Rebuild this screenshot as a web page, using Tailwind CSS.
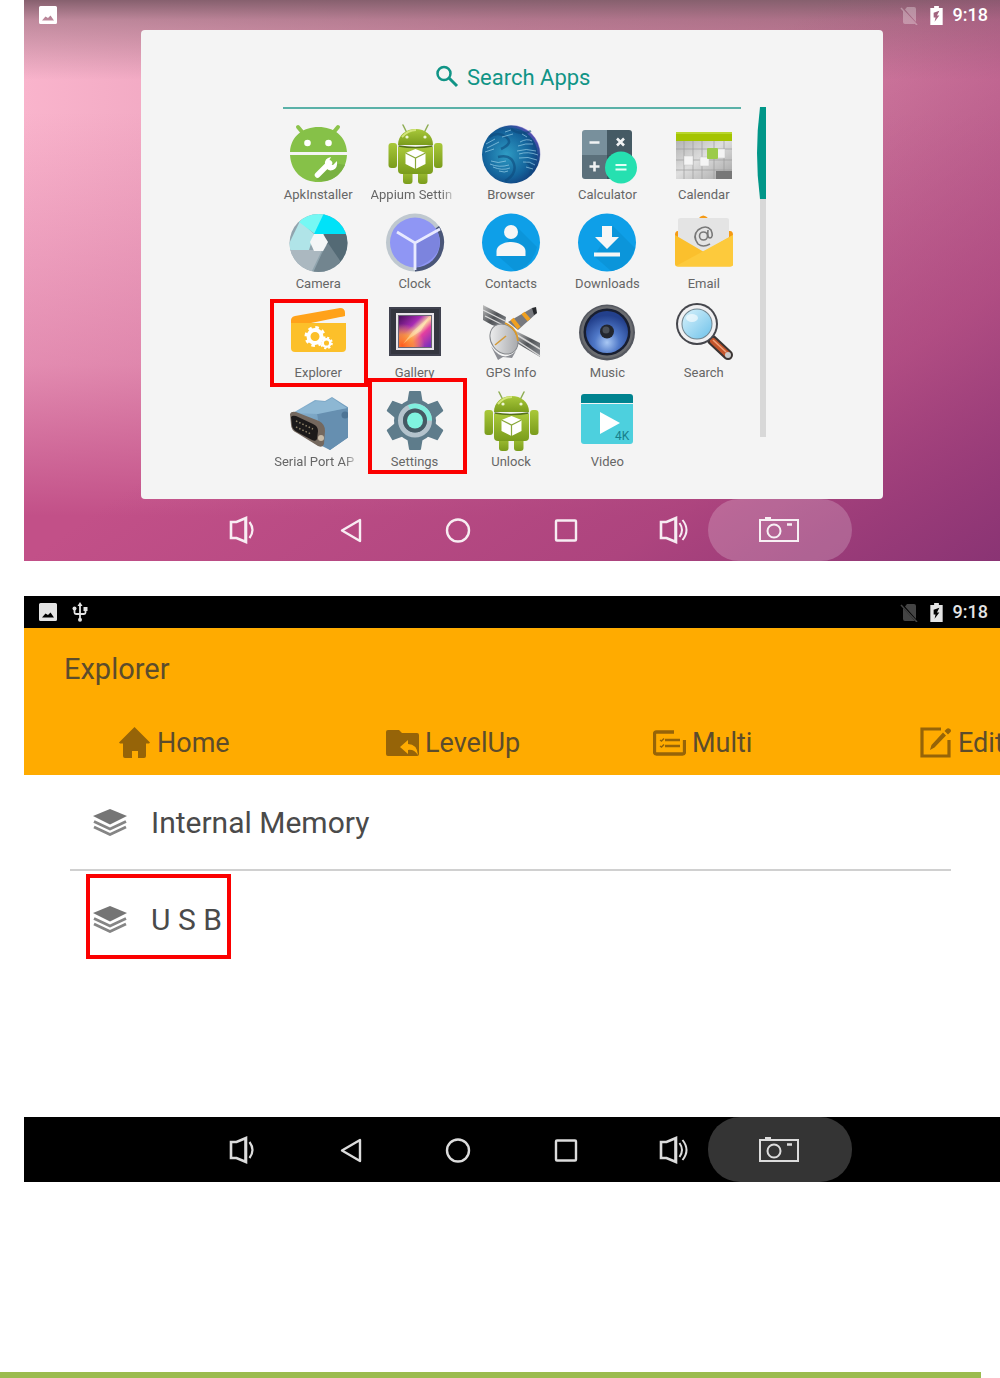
<!DOCTYPE html>
<html lang="en">
<head>
<meta charset="utf-8">
<title>Explorer – USB</title>
<script src="https://cdn.jsdelivr.net/npm/@tailwindcss/browser@4"></script>
</head>
<body class="bg-white font-['Roboto',sans-serif]">
<svg class="absolute size-0" aria-hidden="true">
  <defs>
    <linearGradient id="gDroid" x1="0" y1="0" x2="0" y2="1"><stop offset="0" stop-color="#a9c83a"/><stop offset="1" stop-color="#7a9c1c"/></linearGradient>
    <radialGradient id="gGlobe" cx=".42" cy=".5" r=".6"><stop offset="0" stop-color="#2f9cc4"/><stop offset=".65" stop-color="#14649c"/><stop offset="1" stop-color="#123a78"/></radialGradient>
    <linearGradient id="gRim" x1="0" y1="1" x2="1" y2="0"><stop offset=".6" stop-color="#1f5f9a" stop-opacity="0"/><stop offset="1" stop-color="#9a4fe0"/></linearGradient>
    <linearGradient id="gCal" x1="0" y1="0" x2="1" y2="1"><stop offset="0" stop-color="#b4b4b4"/><stop offset=".45" stop-color="#dedede"/><stop offset="1" stop-color="#a4a4a4"/></linearGradient>
    <linearGradient id="gPhoto" x1="0" y1="0" x2="1" y2="1"><stop offset="0" stop-color="#4b0f5c"/><stop offset=".35" stop-color="#a82bb4"/><stop offset=".52" stop-color="#ffd9a0"/><stop offset=".66" stop-color="#e43fa0"/><stop offset="1" stop-color="#6c2cc0"/></linearGradient>
    <radialGradient id="gFlare" cx=".1" cy=".95" r=".7"><stop offset="0" stop-color="#ff5a20"/><stop offset=".5" stop-color="#ff9a30" stop-opacity=".8"/><stop offset="1" stop-color="#ffb060" stop-opacity="0"/></radialGradient>
    <radialGradient id="gCone" cx=".5" cy=".75" r=".65"><stop offset="0" stop-color="#a9c8f4"/><stop offset=".45" stop-color="#4f78c8"/><stop offset="1" stop-color="#23408c"/></radialGradient>
    <linearGradient id="gLens" x1="0" y1="0" x2="1" y2="1"><stop offset="0" stop-color="#d8f2fc"/><stop offset="1" stop-color="#6fc2ea"/></linearGradient>
    <linearGradient id="gDish" x1="0" y1="0" x2="1" y2="1"><stop offset="0" stop-color="#fafafa"/><stop offset="1" stop-color="#9a9ca0"/></linearGradient>
    <linearGradient id="gMetal" x1="0" y1="0" x2="1" y2="1"><stop offset="0" stop-color="#c2c2c2"/><stop offset=".5" stop-color="#505357"/><stop offset="1" stop-color="#8f9297"/></linearGradient>
    <linearGradient id="gPlug" x1="0" y1="0" x2="1" y2="1"><stop offset="0" stop-color="#8fb8d4"/><stop offset="1" stop-color="#5a87ab"/></linearGradient>
  </defs>
  <symbol id="droid" viewBox="0 0 60 60">
    <path d="M22 9 18 1M39 9l4-8" stroke="#8fae55" stroke-width="1.5" stroke-linecap="round"/>
    <g fill="url(#gDroid)">
      <path d="M13 21C13 11 21 5 30.500 5S48 11 48 21z"/>
      <rect x="3.500" y="19" width="8.500" height="25" rx="3"/><rect x="49" y="19" width="8.500" height="25" rx="3"/>
      <rect x="18" y="44" width="9.500" height="16" rx="3"/><rect x="33" y="44" width="9.500" height="16" rx="3"/>
      <path d="M13 23h35v23q0 4-4 4H17q-4 0-4-4z"/>
    </g>
    <path d="M13.500 22q17 3 34 0" stroke="#54701a" stroke-width="1.500" fill="none"/>
    <path d="M17 13q6-7 14-7" stroke="#d3e57c" stroke-width="2" fill="none"/>
    <circle cx="22" cy="13" r="1.600" fill="#eef5d8"/><circle cx="40" cy="13" r="1.600" fill="#eef5d8"/>
    <path d="m30.500 25 10 4v11l-10 5-10-5V29z" fill="#fff"/>
    <path d="m20.500 29 10 5 10-5M30.500 34v11" stroke="#8aa83a" stroke-width="1.200" fill="none"/>
  </symbol>
  <symbol id="picture" viewBox="0 0 18 18"><path fill="currentColor" fill-rule="evenodd" d="M1.500 0h15Q18 0 18 1.500v15q0 1.500-1.500 1.500h-15Q0 18 0 16.500v-15Q0 0 1.500 0zM3 14.500h12L11.500 9.500 9 12 6.500 10.500z"/></symbol>
  <symbol id="usb" viewBox="0 0 16 20"><path d="M8 2v15M2.500 6v4.500q0 1.500 1.500 1.500h8q1.500 0 1.500-1.500V6" fill="none" stroke="currentColor" stroke-width="1.800"/><path fill="currentColor" d="m8 0 2.500 4h-5z"/><circle cx="8" cy="17.800" r="2" fill="currentColor"/><circle cx="2.500" cy="6.500" r="2" fill="currentColor"/><path fill="currentColor" d="M11.500 5h4v4h-4z"/></symbol>
  <symbol id="nosim" viewBox="0 0 18 20"><path fill="currentColor" d="M7 2h7q2 0 2 2v13L5 4.500zM3 6l12 13H5q-2 0-2-2z"/><path d="m1 3 16 17" stroke="currentColor" stroke-width="1.500"/></symbol>
  <symbol id="battery" viewBox="0 0 13 20"><path fill="currentColor" fill-rule="evenodd" d="M4 0h5v2h4v18H0V2h4zm5.500 5L3.500 7v5h2l-1 4.500L9.500 10H7z"/></symbol>
  <symbol id="vdown" viewBox="0 0 30 30"><path d="M4 7h5.500L19 3v24l-9.500-4H4zM18.500 3v24" fill="none" stroke="currentColor" stroke-width="2.600"/><path d="M22.500 7q6 8 0 16" fill="none" stroke="currentColor" stroke-width="2.200"/></symbol>
  <symbol id="vup" viewBox="0 0 34 30"><path d="M4 7h5.500L19 3v24l-9.500-4H4zM18.500 3v24" fill="none" stroke="currentColor" stroke-width="2.600"/><path d="M22.500 8q5 7 0 14M25.500 5q8 10 0 20" fill="none" stroke="currentColor" stroke-width="2"/></symbol>
  <symbol id="back" viewBox="0 0 24 26"><path d="M22 3v21L4 13.500z" fill="none" stroke="currentColor" stroke-width="2.400" stroke-linejoin="round"/></symbol>
  <symbol id="home" viewBox="0 0 26 26"><circle cx="13" cy="13.500" r="11" fill="none" stroke="currentColor" stroke-width="2.400"/></symbol>
  <symbol id="recent" viewBox="0 0 24 24"><rect x="2" y="2.500" width="20" height="20" rx="1" fill="none" stroke="currentColor" stroke-width="2.400"/></symbol>
  <symbol id="camera" viewBox="0 0 42 28"><path d="M1 4h38v21H1zM6 2h6" fill="none" stroke="currentColor" stroke-width="2"/><circle cx="15" cy="15" r="6.500" fill="none" stroke="currentColor" stroke-width="2"/><path d="M28 8.500h5" stroke="currentColor" stroke-width="2.500"/></symbol>
  <symbol id="layers" viewBox="0 0 34 28"><path d="m17 1 17 7-17 8.500L0 8z" fill="#757575"/><path d="m1 13.500 16 7.500 16-7.500M1 19l16 7.500L33 19" fill="none" stroke="#858585" stroke-width="2.800"/></symbol>
</svg>

<main class="pl-6">
  <!-- Launcher screen -->
  <section class="relative overflow-hidden bg-[linear-gradient(180deg,#86606e_0px,#86606e80_20px,#86606e00_80px),linear-gradient(90deg,#f9b4cc_0%,#e08fae_50%,#cf7a9d_100%)]">
    <div class="absolute inset-0 bg-[linear-gradient(145deg,#b4447e00_45%,#a43f7ab3_78%,#8a3474_100%),linear-gradient(180deg,#c4508600_20%,#c2508866_65%,#c25088_92%)]"></div>
    <div class="relative">
      <header class="flex h-[30px] items-center justify-between pl-[15px] pr-3 text-white">
        <svg class="size-[18px]"><use href="#picture"/></svg>
        <div class="flex items-center">
          <svg class="mr-3 h-5 w-[18px] text-white/30"><use href="#nosim"/></svg>
          <svg class="mr-[10px] h-[19px] w-[13px]"><use href="#battery"/></svg>
          <time class="text-lg font-medium">9:18</time>
        </div>
      </header>

      <div class="mx-[12%] h-[469px] rounded-sm bg-[#f4f4f4] pt-[29px]">
        <label class="flex h-9 items-center justify-center pl-1 text-[#109486]">
          <svg class="mr-2 size-6" viewBox="0 0 24 24" fill="none" stroke="currentColor"><circle cx="9" cy="8.500" r="6.500" stroke-width="2.500"/><path d="m14 13 8 8" stroke-width="3"/></svg>
          <input type="text" aria-label="Search Apps" placeholder="Search Apps" class="w-[126px] bg-transparent text-[22px] outline-none placeholder:text-[#109486]">
        </label>
        <div class="mt-3 flex justify-center pl-[13px]">
          <div class="w-[482px]">
            <div class="mx-3 h-0.5 bg-[#5ab1a8]"></div>
            <ul class="-ml-px mt-[15px] mr-px grid grid-cols-5 text-center text-[13px] leading-[18px] text-[#666]">
              <li class="h-[89px]"><a href="#" class="flex flex-col items-center gap-0.5">
                <svg class="size-[60px]" viewBox="0 0 60 60"><path d="m15 9-5-6M45 9l5-6" stroke="#8bc34a" stroke-width="4" stroke-linecap="round"/><path d="M2 28C3 12 15 3 30.500 3S58 12 59 28zM2 31h57C58 48 46 58 30.500 58S3 48 2 31z" fill="#86c148"/><circle cx="19.500" cy="19" r="3.300" fill="#fff"/><circle cx="40.500" cy="19" r="3.300" fill="#fff"/><path d="m28 56 18-17 11 2q-6 13-19 16z" fill="#79b142"/><path d="m29.500 51 12-12" stroke="#fff" stroke-width="5.500" stroke-linecap="round"/><path d="M43 33q-7 1-6 8 2 7 8 5 5-2 4-9l-4 4-3-1-1-3z" fill="#fff"/></svg>
                ApkInstaller</a></li>
              <li><a href="#" class="flex flex-col items-center gap-0.5"><svg class="size-[60px]"><use href="#droid"/></svg>
                <span class="w-[88px] overflow-hidden whitespace-nowrap text-left [mask-image:linear-gradient(90deg,#000_80%,transparent_98%)]">Appium Settin</span></a></li>
              <li><a href="#" class="flex flex-col items-center gap-0.5">
                <svg class="size-[60px]" viewBox="0 0 60 60"><circle cx="30" cy="30.500" r="29" fill="url(#gGlobe)"/><circle cx="30" cy="30.500" r="28" fill="none" stroke="url(#gRim)" stroke-width="3"/><g fill="none" stroke="#0e4a7c" stroke-width="2.500" opacity=".6"><path d="M8 13q9-6 17 0t-5 12M30 5q10 7 20 2M17 33q13-3 16 7t-9 17M45 38q8 4 4 13"/></g><g fill="none" stroke="#a4d8ee" stroke-width=".8" opacity=".8"><path d="M5 20l9-5M6 24l12-6M4 28l9-3M10 37q7 3 15 0M9 40q9 4 19 1M12 43q9 4 17 1M18 47q6 2 9 0M39 18q7-4 12-1M37 22q8-3 15-2M36 27q9-3 19 0M38 30q9-3 19 1M38 34q9-2 18 2M42 38q7-1 12 3M45 43l7 2M24 8l6-2M21 13l11-3M41 10l5 3"/></g></svg>
                Browser</a></li>
              <li><a href="#" class="flex flex-col items-center gap-0.5">
                <svg class="size-[60px]" viewBox="0 0 60 60"><path d="M8 6h22v25H5V9q0-3 3-3z" fill="#78909c"/><path d="M30 6h22q3 0 3 3v22H30z" fill="#455a64"/><path d="M5 31h25v24H8q-3 0-3-3z" fill="#5b707b"/><path d="M30 31h25v21q0 3-3 3H30z" fill="#3f525c"/><path d="M12.500 18.500h10M17.500 37.500v10M12.500 42.500h10M40 14.500l7 7m0-7-7 7" stroke="#f0f2f3" stroke-width="2.600"/><circle cx="44" cy="43.500" r="16" fill="#26e0b0"/><path d="M38.500 41h11M38.500 45.500h11" stroke="#e4fff6" stroke-width="2.200"/></svg>
                Calculator</a></li>
              <li><a href="#" class="flex flex-col items-center gap-0.5">
                <svg class="size-[60px]" viewBox="0 0 60 60"><path d="M2 17h56v38H2z" fill="url(#gCal)"/><path d="M2 25h56M2 36h56M2 46h56M10 17v38M19 17v38M28 17v38M40 17v38M50 17v38" stroke="#9c9c9c" stroke-width=".7"/><path d="M42 47h16v8H42z" fill="#777"/><path d="M10 32h9v9h-9zM26 33h9v9h-9zM43 25h8v9h-8z" fill="#f4f4f4" stroke="#c4c4c4" stroke-width=".5"/><rect x="33" y="24" width="11" height="11" rx="1" fill="#9ccb4a"/><path d="M2 8h56v9H2z" fill="#a4c400"/><path d="M2 8h56v2H2z" fill="#b8d62c"/></svg>
                Calendar</a></li>

              <li class="h-[89px]"><a href="#" class="flex flex-col items-center gap-0.5">
                <svg class="size-[60px]" viewBox="0 0 60 60"><clipPath id="lens"><circle cx="30.500" cy="30" r="29"/></clipPath><g clip-path="url(#lens)"><path d="M0 0h60v60H0z" fill="#90a4ae"/><path d="M-2 37 12 8l14 13-5 16z" fill="#b0e4e8"/><path d="M11 9 20 0h20L27 21z" fill="#76f8f4"/><path d="M36 0h30v21H26z" fill="#00e2f8"/><path d="M36 21h26v32H51L37 29z" fill="#546a75"/><path d="M40 30 55 52 40 62H24l10-22z" fill="#72858f"/><path d="M0 37h34L22 62H0z" fill="#abb8c0"/></g><path d="M26 21h9l5 8-5 9h-9l-4-9z" fill="#f4f6f7"/></svg>
                Camera</a></li>
              <li><a href="#" class="flex flex-col items-center gap-0.5">
                <svg class="size-[60px]" viewBox="0 0 60 60"><circle cx="30" cy="29.500" r="29" fill="#bfc8cf"/><path d="M54 13A29 29 0 0 1 30 58.500V30z" fill="#4a5678"/><circle cx="30" cy="29.500" r="25" fill="#8f96f4"/><path d="M30 30 52 17q11 26-22 38z" fill="#7c84de"/><path d="m12 19 18 11 25-14M30 30v27" stroke="#e8eaff" stroke-width="2.800" fill="none"/></svg>
                Clock</a></li>
              <li><a href="#" class="flex flex-col items-center gap-0.5">
                <svg class="size-[60px]" viewBox="0 0 60 60"><circle cx="30" cy="29.500" r="29" fill="#0e9fe8"/><path d="m36 14 20 20q-5 20-22 24L17 43z" fill="#0b95da"/><circle cx="30" cy="19" r="7" fill="#f6f6f6"/><path d="M15.500 43v-5c0-5 7-9 14.500-9s14.500 4 14.500 9v5z" fill="#f6f6f6"/></svg>
                Contacts</a></li>
              <li><a href="#" class="flex flex-col items-center gap-0.5">
                <svg class="size-[60px]" viewBox="0 0 60 60"><circle cx="30" cy="29.500" r="29" fill="#0e9fe8"/><path d="m36 13 22 22q-6 20-24 23L17 43z" fill="#0b95da"/><path d="M25 13h10v11h7L30 36 18 24h7z" fill="#f6f6f6"/><path d="M17 41.500h26" stroke="#f6f6f6" stroke-width="4"/></svg>
                Downloads</a></li>
              <li><a href="#" class="flex flex-col items-center gap-0.5">
                <svg class="size-[60px]" viewBox="0 0 60 60"><path d="M24 6q5-7 11 0zM1 22q0-4 3-4h52q3 0 3 4v5H1z" fill="#f59a14"/><path d="M7 5h46q2 0 2 2v34H4V7q0-2 3-2z" fill="#e4e4e4"/><path d="M1 22 30 39l29-17v29q0 2.500-3 2.500H4q-3 0-3-2.500z" fill="#fbc02d"/><path d="M2 53 59 22v29q0 2.500-3 2.500H4z" fill="#fdca3c"/><path d="M36 31q-7 4-12 0-6-8 0-14 8-6 13 0 3 7-1 8-3 0-2-8" fill="none" stroke="#787878" stroke-width="1.600"/><circle cx="29.500" cy="23" r="4" fill="none" stroke="#787878" stroke-width="1.600"/></svg>
                Email</a></li>

              <li class="relative h-[89px]"><a href="#" class="flex flex-col items-center gap-0.5">
                <svg class="size-[60px]" viewBox="0 0 60 60"><path d="M3 21q-1-6 4-7l45-8q5 0 5 5v3z" fill="#ffa21a"/><path d="M3 21h55v25q0 4-4 4H7q-4 0-4-4z" fill="#fcc02a"/><path d="M3 21h20l34-7v-3L3 18z" fill="#ffa21a"/><circle cx="27" cy="34.500" r="6.500" fill="none" stroke="#fff" stroke-width="4"/><circle cx="27" cy="34.500" r="9" fill="none" stroke="#fff" stroke-width="3" stroke-dasharray="3.500 3.570"/><circle cx="38.500" cy="41" r="3.800" fill="none" stroke="#fff" stroke-width="2.500"/><circle cx="38.500" cy="41" r="5.300" fill="none" stroke="#fff" stroke-width="2" stroke-dasharray="2.080 2.080"/></svg>
                Explorer</a>
                <span class="absolute -right-0.5 -top-[3px] left-0 h-[88px] border-4 border-[#fb0000]"></span></li>
              <li class="h-[89px]"><a href="#" class="flex flex-col items-center gap-0.5">
                <svg class="size-[60px]" viewBox="0 0 60 60"><path d="M4 5h52v49H4z" fill="#40424f"/><path d="M6 7h48v45H6z" fill="#34363f"/><path d="M11 11h38v37H11z" fill="#e8e4e8"/><path d="M13 13h34v33H13z" fill="#6a6474"/><path d="M14 14h32v31H14z" fill="url(#gPhoto)"/><path d="M14 14h32v31H14z" fill="url(#gFlare)"/><path d="m18 42 10-13 17-15-9 15-11 7z" fill="#fff0c0" opacity=".45"/></svg>
                Gallery</a></li>
              <li><a href="#" class="flex flex-col items-center gap-0.5">
                <svg class="size-[60px]" viewBox="0 0 60 60"><path d="m2 3 23 12-2 12-12-4L2 18z" fill="url(#gMetal)"/><path d="m2 8 22 11M4 14l18 9" stroke="#ddd" stroke-width="1.200"/><path d="m35 29 24 12v14L34 40z" fill="url(#gMetal)"/><path d="m36 33 23 14M35 38l24 16" stroke="#d4d4d4" stroke-width="1.500"/><path d="m27 20 24-14 5 5-19 17z" fill="#77797e"/><path d="m31 17 7 9M42 11l6 7" stroke="#f0a020" stroke-width="4"/><path d="m51 6 4-1 1 6-3 2z" fill="#26282c"/><ellipse cx="23" cy="37" rx="13" ry="16" transform="rotate(-35 23 37)" fill="url(#gDish)" stroke="#83868a"/><path d="M10 44q12 18 25 5l-4 7-9-1-5 3z" fill="#8c8e94"/><path d="m14 43 11-9" stroke="#d49a38" stroke-width="1.600"/><path d="M24 21q12 5 13 18" stroke="#dc9a28" stroke-width="1.800" fill="none"/></svg>
                GPS Info</a></li>
              <li><a href="#" class="flex flex-col items-center gap-0.5">
                <svg class="size-[60px]" viewBox="0 0 60 60"><circle cx="30" cy="30.500" r="28" fill="#555860"/><circle cx="30" cy="30" r="26" fill="#6a6c70"/><circle cx="30" cy="30" r="23.500" fill="#181e30"/><circle cx="30" cy="30" r="21" fill="url(#gCone)"/><circle cx="30" cy="29.500" r="7" fill="#22262e"/><circle cx="29" cy="28" r="3.500" fill="#4a5058"/></svg>
                Music</a></li>
              <li><a href="#" class="flex flex-col items-center gap-0.5">
                <svg class="size-[60px]" viewBox="0 0 60 60"><path d="m38 38 16 15" stroke="#3a3433" stroke-width="10" stroke-linecap="round"/><path d="m39 39 14 13" stroke="#c4552c" stroke-width="6" stroke-linecap="round"/><path d="m39 38 13 12" stroke="#f0a078" stroke-width="1.600"/><circle cx="54" cy="53" r="3" fill="#c8c8c8"/><circle cx="23" cy="22" r="21" fill="#45464c"/><circle cx="23" cy="22" r="19" fill="#f0f0f2"/><circle cx="23" cy="22" r="15.500" fill="#71858f"/><circle cx="23" cy="22" r="14.500" fill="url(#gLens)"/><ellipse cx="18" cy="16" rx="6" ry="4" fill="#fff" opacity=".6"/></svg>
                Search</a></li>

              <li class="h-[89px]"><a href="#" class="flex flex-col items-center gap-0.5">
                <svg class="size-[60px]" viewBox="0 0 60 60"><path d="M3 23 27 9l10 1 7-4 17 11 1 28-20 14-12-6z" fill="url(#gPlug)"/><path d="m29 22 33-5v28L42 59l-8-6z" fill="#668fb0"/><path d="m6 22 22-12 9 1 7-4 15 10-29 6z" fill="#8db7d3"/><path d="M2 23q1-3 6-2l23 9q6 3 6 10l-1 13q-1 4-6 2L9 42q-6-3-6-8z" fill="#74685e"/><path d="M3 26q1-2 5-1l17 8q5 2 5 7l-1 8q-1 3-5 1L9 41q-5-3-5-7z" fill="#1c1a1a"/><path d="m8 30 17 8M8 36l15 7" stroke="#91856a" stroke-width="1.500" stroke-dasharray="1.500 2"/><circle cx="33" cy="47" r="3" fill="#c8bba8"/><circle cx="57" cy="24" r="3.500" fill="#4d7495"/></svg>
                <span class="w-[88px] overflow-hidden whitespace-nowrap text-left [mask-image:linear-gradient(90deg,#000_80%,transparent_98%)]">Serial Port AP</span></a></li>
              <li class="relative"><a href="#" class="flex flex-col items-center gap-0.5">
                <svg class="size-[60px]" viewBox="0 0 60 60"><g fill="#5e7c8b"><circle cx="30" cy="29.500" r="21"/><g id="teeth"><path d="m22 13 2-12q0-1 1-1h10q1 0 1 1l2 12v33l-2 12q0 1-1 1H25q-1 0-1-1l-2-12z"/></g><use href="#teeth" transform="rotate(60 30 29.500)"/><use href="#teeth" transform="rotate(120 30 29.500)"/></g><circle cx="30" cy="29.500" r="14.500" fill="none" stroke="#b4c3cc" stroke-width="5"/><path d="M24 16.500A14.500 14.500 0 0 1 44.500 29.500" fill="none" stroke="#80eede" stroke-width="5"/><circle cx="30" cy="29.500" r="12" fill="#455a64"/><circle cx="30" cy="29.500" r="8" fill="#80f4e0"/></svg>
                Settings</a>
                <span class="absolute -right-1 -top-[13px] left-0.5 h-24 border-4 border-[#fb0000]"></span></li>
              <li><a href="#" class="flex flex-col items-center gap-0.5"><svg class="size-[60px]"><use href="#droid"/></svg>Unlock</a></li>
              <li><a href="#" class="flex flex-col items-center gap-0.5">
                <svg class="size-[60px]" viewBox="0 0 60 60"><path d="M4 13h52v37q0 3-3 3H7q-3 0-3-3z" fill="#4dd0de"/><path d="M7 3h46q3 0 3 3v6H4V6q0-3 3-3z" fill="#00838f"/><path d="M23 21v22l20-11z" fill="#fff"/><text x="38" y="49" font-size="12" fill="#17808c">4K</text></svg>
                Video</a></li>
            </ul>
          </div>
          <div class="ml-1 h-[330px] w-[9px]">
            <svg class="h-full w-full" viewBox="0 0 9 330"><path d="M3 90h6v240H3z" fill="#d8d8d8"/><path d="M3 0h6v92H3Q-3 46 3 0z" fill="#009688"/></svg>
          </div>
        </div>
      </div>

      <nav class="flex h-[62px] justify-center text-white/90" aria-label="Launcher navigation">
        <button class="flex w-[108px] items-center justify-center" aria-label="Volume down"><svg class="size-[30px]"><use href="#vdown"/></svg></button>
        <button class="flex w-[108px] items-center justify-center" aria-label="Back"><svg class="h-[26px] w-6"><use href="#back"/></svg></button>
        <button class="flex w-[108px] items-center justify-center" aria-label="Home"><svg class="size-[26px]"><use href="#home"/></svg></button>
        <button class="flex w-[108px] items-center justify-center" aria-label="Recent apps"><svg class="size-6"><use href="#recent"/></svg></button>
        <button class="flex w-[108px] items-center justify-center" aria-label="Volume up"><svg class="h-[30px] w-[34px]"><use href="#vup"/></svg></button>
        <button class="-ml-5 -mr-4 flex w-36 items-center justify-center rounded-[32px] bg-white/20" aria-label="Screenshot"><svg class="h-7 w-[42px]"><use href="#camera"/></svg></button>
      </nav>
    </div>
  </section>

  <!-- Explorer screen -->
  <section class="mt-[35px] overflow-hidden">
    <header class="flex h-8 items-center justify-between bg-black pl-[15px] pr-3 text-[#e4e4e4]">
      <div class="flex items-center gap-[15px]">
        <svg class="size-[18px]"><use href="#picture"/></svg>
        <svg class="h-5 w-4"><use href="#usb"/></svg>
      </div>
      <div class="flex items-center">
        <svg class="mr-3 h-5 w-[18px] text-[#444]"><use href="#nosim"/></svg>
        <svg class="mr-[10px] h-[19px] w-[13px]"><use href="#battery"/></svg>
        <time class="text-lg font-medium">9:18</time>
      </div>
    </header>
    <div class="h-[147px] overflow-hidden bg-[#ffab00] text-[#5c4c2c]">
      <h1 class="pl-10 pt-5 text-[29px] leading-[42px]">Explorer</h1>
      <div class="mt-8 flex pl-[95px] text-[27px] leading-[42px]">
        <button class="flex w-[267px] shrink-0 items-center gap-[7px]"><svg class="h-8 w-[31px]" viewBox="0 0 31 32" fill="#966408"><path d="M15.500 0 31 15.500l-1 1h-3V29q0 2-2 2h-6v-7h-6v7H6q-2 0-2-2V16.500H1l-1-1z"/></svg>Home</button>
        <button class="flex w-[267px] shrink-0 items-center gap-1.5"><svg class="h-[26px] w-[33px]" viewBox="0 0 33 26"><path d="M2 0h11l3 3h15q2 0 2 2v19q0 2-2 2H2q-2 0-2-2V2q0-2 2-2z" fill="#966408"/><path d="m14 17 8-7v4q9 0 10 11-4-6-10-5v4z" fill="#ffab00"/></svg>LevelUp</button>
        <button class="flex w-[267px] shrink-0 items-center gap-1.5"><svg class="h-[26px] w-[33px]" viewBox="0 0 33 26" fill="none" stroke="#966408" stroke-width="3.300"><path d="M21 2H3.500q-2 0-2 2v18q0 2 2 2h26q2 0 2-2V10"/><path d="M12 10h15M12 16h15" stroke-width="2.400"/><path d="m7 10 1.500 1L11 8.500M7 16l1.500 1 2.500-2.500" stroke-width="1.500"/></svg>Multi</button>
        <button class="flex w-[267px] shrink-0 items-center gap-[7px]"><svg class="h-8 w-[31px]" viewBox="0 0 31 32"><path d="M21 2H2v27h27V13" fill="none" stroke="#966408" stroke-width="3.200"/><path d="m10 23 1.500-5L23 5.500 26 8.500 14.500 20.500zM24.500 4l2-2q1.500-1.500 3.500 0t0 3.500l-2 2z" fill="#966408"/></svg>Edit</button>
      </div>
    </div>
    <ul class="min-h-[342px] pl-[46px] pr-[49px] text-[30px] text-[#4a4a4a]">
      <li class="border-b-2 border-[#d0d0d0]"><a href="#" class="flex h-[94px] items-center gap-6 pl-[23px]"><svg class="h-7 w-[34px]"><use href="#layers"/></svg>Internal Memory</a></li>
      <li class="relative"><a href="#" class="flex h-[96px] items-center gap-6 pl-[23px]"><svg class="h-7 w-[34px]"><use href="#layers"/></svg>U S B</a>
        <span class="absolute left-4 top-[3px] h-[85px] w-[145px] border-4 border-[#fb0000]"></span></li>
    </ul>
    <nav class="flex h-[65px] justify-center bg-black text-[#dcdcdc]" aria-label="Explorer navigation">
      <button class="flex w-[108px] items-center justify-center" aria-label="Volume down"><svg class="size-[30px]"><use href="#vdown"/></svg></button>
      <button class="flex w-[108px] items-center justify-center" aria-label="Back"><svg class="h-[26px] w-6"><use href="#back"/></svg></button>
      <button class="flex w-[108px] items-center justify-center" aria-label="Home"><svg class="size-[26px]"><use href="#home"/></svg></button>
      <button class="flex w-[108px] items-center justify-center" aria-label="Recent apps"><svg class="size-6"><use href="#recent"/></svg></button>
      <button class="flex w-[108px] items-center justify-center" aria-label="Volume up"><svg class="h-[30px] w-[34px]"><use href="#vup"/></svg></button>
      <button class="-ml-5 -mr-4 flex w-36 items-center justify-center rounded-[32px] bg-[#343434]" aria-label="Screenshot"><svg class="h-7 w-[42px]"><use href="#camera"/></svg></button>
    </nav>
  </section>
</main>
<footer class="mr-[19px] mt-[190px] h-1.5 bg-[#9bbb4f]"></footer>
</body>
</html>
